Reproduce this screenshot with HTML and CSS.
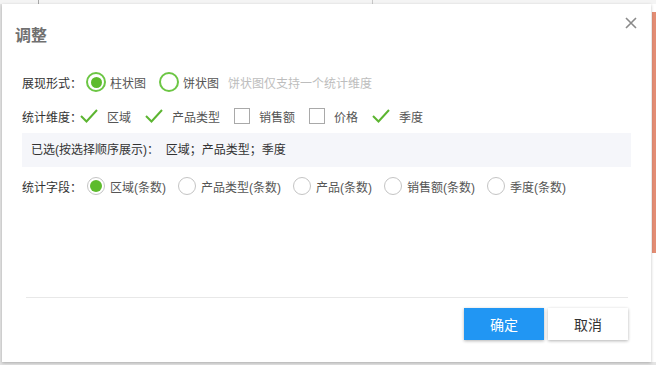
FILE: index.html
```html
<!DOCTYPE html>
<html lang="zh-CN">
<head>
<meta charset="UTF-8">
<title>调整</title>
<link rel="stylesheet" href="styles.css">
</head>
<body>

<div class="topbar"></div>

<div class="stage">
    <!-- 调整弹窗 -->
    <div class="dialog">
        <div class="dialog-header">
            <span class="dialog-title">调整</span>
            <span class="dialog-close">
                <svg width="12" height="12" viewBox="0 0 12 12"><path d="M1 1L11 11M11 1L1 11" stroke="#8a8a8a" stroke-width="1.6" fill="none"/></svg>
            </span>
        </div>

        <div class="dialog-body">
            <div class="form-row row-type">
                <span class="form-label">展现形式：</span>
                <label class="opt"><span class="radio-big checked"></span>柱状图</label>
                <label class="opt"><span class="radio-big"></span>饼状图</label>
                <span class="hint">饼状图仅支持一个统计维度</span>
            </div>

            <div class="form-row row-dim">
                <span class="form-label">统计维度：</span>
                <label class="opt-check"><svg class="tick" width="18" height="14" viewBox="0 0 18 14"><path d="M1 7L6.5 12.5L17 1" stroke="#5cb531" stroke-width="2" fill="none"/></svg>区域</label>
                <label class="opt-check"><svg class="tick" width="18" height="14" viewBox="0 0 18 14"><path d="M1 7L6.5 12.5L17 1" stroke="#5cb531" stroke-width="2" fill="none"/></svg>产品类型</label>
                <label class="opt-check"><span class="box"></span>销售额</label>
                <label class="opt-check"><span class="box"></span>价格</label>
                <label class="opt-check"><svg class="tick" width="18" height="14" viewBox="0 0 18 14"><path d="M1 7L6.5 12.5L17 1" stroke="#5cb531" stroke-width="2" fill="none"/></svg>季度</label>
            </div>

            <div class="selected-box">已选(按选择顺序展示)：&nbsp;&nbsp;区域；产品类型；季度</div>

            <div class="form-row row-field">
                <span class="form-label">统计字段：</span>
                <label class="opt-field"><span class="radio checked"></span>区域(条数)</label>
                <label class="opt-field"><span class="radio"></span>产品类型(条数)</label>
                <label class="opt-field"><span class="radio"></span>产品(条数)</label>
                <label class="opt-field"><span class="radio"></span>销售额(条数)</label>
                <label class="opt-field"><span class="radio"></span>季度(条数)</label>
            </div>
        </div>

        <div class="dialog-footer">
            <button class="btn btn-primary">确定</button>
            <button class="btn">取消</button>
        </div>
    </div>

    <div class="side">
        <div class="side-accent"></div>
    </div>
</div>

</body>
</html>
```

FILE: styles.css
```css
* {
    box-sizing: border-box;
}

body, html {
    margin: 0;
    height: 365px;
    overflow: hidden;
    background-color: #e4e4e4;
    font-family: "Liberation Sans", "Noto Sans CJK SC", sans-serif;
    font-size: 12px;
    color: #333;
}

/* 背景页面顶部 */
.topbar {
    height: 4px;
    background-color: #f4f4f4;
    background-image: linear-gradient(#a8a8a8, #a8a8a8), linear-gradient(#c8c8c8, #c8c8c8);
    background-size: 1px 4px, 1px 4px;
    background-position: 38px 0, 372px 0;
    background-repeat: no-repeat;
}

.stage {
    display: flex;
}

.side {
    width: 5px;
    height: 358px;
    background-color: #fff;
}

.side-accent {
    margin-top: 8px;
    margin-left: 1px;
    height: 241px;
    background-color: #e38d74;
}

/* 弹窗 */
.dialog {
    position: relative;
    margin-left: 2px;
    width: 649px;
    height: 358px;
    background-color: white;
    box-shadow: 0 1px 3px rgba(0, 0, 0, 0.25);
    display: flex;
    flex-direction: column;
}

.dialog-header {
    padding: 20px 0 0 13px;
    height: 44px;
}

.dialog-title {
    font-size: 16px;
    line-height: 24px;
    font-weight: bold;
    color: #707070;
}

.dialog-close {
    position: absolute;
    top: 13px;
    right: 14px;
    width: 12px;
    height: 12px;
    display: flex;
}

.dialog-body {
    flex: 1;
    padding: 19px 20px 0 20px;
}

.form-row {
    display: flex;
    align-items: center;
    height: 30px;
}

.row-dim {
    margin-top: 4px;
}

.row-field {
    margin-top: 4px;
}

.form-label {
    width: 60px;
    color: #333;
    flex-shrink: 0;
}

.opt {
    display: flex;
    align-items: center;
    color: #555;
    margin-right: 9px;
}

.radio-big {
    width: 20px;
    height: 20px;
    border: 2px solid #6cc644;
    border-radius: 50%;
    margin-left: 4px;
    margin-right: 4px;
    display: flex;
    align-items: center;
    justify-content: center;
}

.radio-big.checked::after {
    content: "";
    width: 11px;
    height: 11px;
    border-radius: 50%;
    background-color: #5dbb2c;
}

.hint {
    color: #bdbdbd;
}

.opt-check {
    display: flex;
    align-items: center;
    color: #555;
    margin-right: 14px;
}

.tick {
    margin-right: 9px;
}

.row-dim .opt-check:first-of-type {
    margin-left: -2px;
}

.box {
    width: 16px;
    height: 16px;
    border: 1px solid #a9a9a9;
    margin-right: 9px;
}

.selected-box {
    margin-top: 2px;
    height: 34px;
    line-height: 34px;
    padding-left: 9px;
    background-color: #f5f6fa;
    color: #333;
}

.opt-field {
    display: flex;
    align-items: center;
    color: #555;
    margin-right: 7px;
}

.radio {
    width: 18px;
    height: 18px;
    border: 1px solid #c4c4c4;
    border-radius: 50%;
    margin-left: 5px;
    margin-right: 5px;
    display: flex;
    align-items: center;
    justify-content: center;
}

.radio.checked::after {
    content: "";
    width: 12px;
    height: 12px;
    border-radius: 50%;
    background-color: #5dbb2c;
}

/* 底部按钮 */
.dialog-footer {
    margin: 0 23px 0 24px;
    border-top: 1px solid #e8e8e8;
    padding: 10px 0 22px;
    display: flex;
    justify-content: flex-end;
    gap: 4px;
}

.btn {
    width: 80px;
    height: 32px;
    border: none;
    background-color: white;
    color: #333;
    font-family: "Liberation Sans", "Noto Sans CJK SC", sans-serif;
    font-size: 14px;
    box-shadow: 0 1px 3px rgba(0, 0, 0, 0.3);
    cursor: pointer;
}

.btn-primary {
    background-color: #2196f3;
    color: white;
}
```
